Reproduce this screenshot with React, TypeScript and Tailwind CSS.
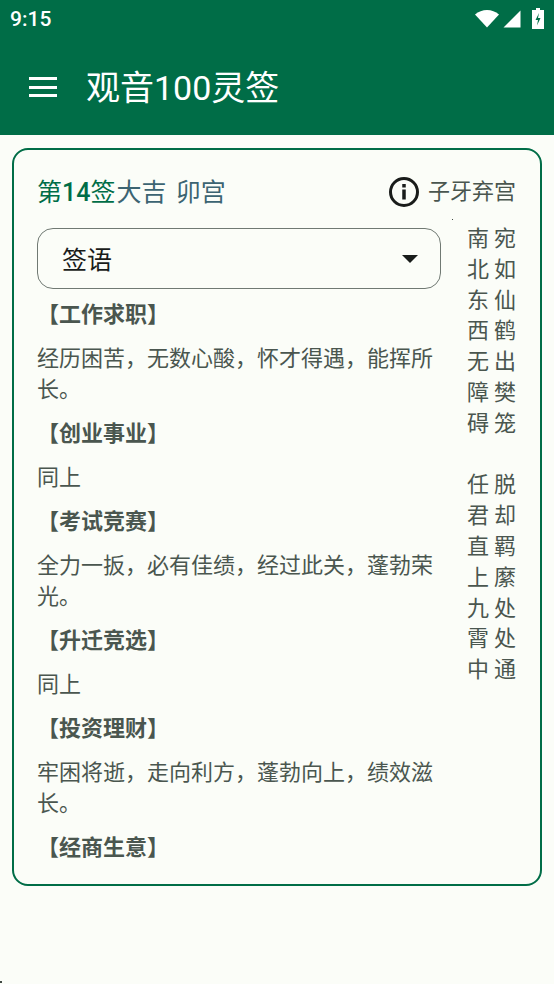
import { Fragment } from 'react';

const FONT = "font-['Roboto','Noto_Sans_CJK_SC',sans-serif]";

const SECTIONS = [
  { title: '【工作求职】', body: '经历困苦，无数心酸，怀才得遇，能挥所长。' },
  { title: '【创业事业】', body: '同上' },
  { title: '【考试竞赛】', body: '全力一扳，必有佳绩，经过此关，蓬勃荣光。' },
  { title: '【升迁竞选】', body: '同上' },
  { title: '【投资理财】', body: '牢困将逝，走向利方，蓬勃向上，绩效滋长。' },
  { title: '【经商生意】', body: '' },
];

const POEM = ['南宛', '北如', '东仙', '西鹤', '无出', '障樊', '碍笼', '', '任脱', '君却', '直羁', '上縻', '九处', '霄处', '中通'];

function StatusBar() {
  return (
    <div className="h-[39px] flex items-center justify-between pl-[10px] pr-[10px] text-white">
      <span className="text-[21px] font-medium leading-none">9:15</span>
      <div className="flex items-center gap-[4px] pb-[2px]">
        <svg width="24" height="20" viewBox="0 0 24 20" fill="#fff">
          <path d="M0 5.500C3.500 2.500 7.500 1 12 1s8.500 1.500 12 4.500L12 18.500z" />
        </svg>
        <svg width="18" height="18" viewBox="0 0 18 18" fill="#fff">
          <path d="M17.500 .5v17H.5z" />
        </svg>
        <svg width="12" height="21" viewBox="0 0 12 21" className="ml-[7.500px]">
          <path d="M4 0h4v2h4v19H0V2h4z" fill="#fff" />
          <path d="M7 5L3.500 12H6L5 17.500l3.500-7.500H6z" fill="#006d47" />
        </svg>
      </div>
    </div>
  );
}

function AppBar() {
  return (
    <div className="h-[96px] flex items-center pl-[29px]">
      <div className="w-[28px] flex flex-col gap-[5.500px]">
        <div className="h-[3px] bg-white" />
        <div className="h-[3px] bg-white" />
        <div className="h-[3px] bg-white" />
      </div>
      <h1 className="ml-[29px] pt-[2px] text-[34px] leading-none font-normal text-white">观音100灵签</h1>
    </div>
  );
}

function Poem() {
  return (
    <div className="relative w-[49px] mt-[2px] shrink-0 text-[22px] leading-[30.800px] text-[#4a564f]">
      <div className="absolute left-[-15px] top-[-5px] w-[1px] h-[1px] bg-[#404943]" />
      {POEM.map((row, i) => (
        <div key={i} className="h-[30.800px] flex justify-between">
          {row.split('').map((ch) => (
            <span key={ch}>{ch}</span>
          ))}
        </div>
      ))}
    </div>
  );
}

export default function App() {
  return (
    <div className={`${FONT} relative w-[554px] h-[984px] overflow-hidden bg-[#fbfdf8]`}>
      <header className="bg-[#006d47]">
        <StatusBar />
        <AppBar />
      </header>

      <main className="mx-[12px] mt-[13px] h-[738px] border-2 border-[#006d47] rounded-[16px] pl-[23px] pr-[24px]">
        <div className="h-[72px] flex items-center justify-between pt-[12px]">
          <div className="text-[25px] leading-none">
            <span className="text-[#006d47]">
              第<span className="font-medium">14</span>签
            </span>
            <span className="ml-[1px] [word-spacing:3px] text-[#3c6472]">大吉 卯宫</span>
          </div>
          <div className="flex items-center gap-[8px]">
            <svg width="32" height="32" viewBox="0 0 32 32" fill="none" className="mb-[1px]">
              <circle cx="16" cy="16" r="13.500" stroke="#191c1a" strokeWidth="3" />
              <rect x="14.250" y="13.500" width="3.500" height="10" fill="#191c1a" />
              <rect x="14.250" y="8" width="3.500" height="3.500" fill="#191c1a" />
            </svg>
            <span className="text-[22px] leading-none text-[#4a564f]">子牙弃宫</span>
          </div>
        </div>

        <div className="flex justify-between">
          <div className="w-[404px] shrink-0">
            <div className="mt-[6px] h-[61px] border-[1.5px] border-[#707973] rounded-[16px] flex items-center justify-between pl-[24px] pr-[22px]">
              <span className="text-[25px] leading-none text-[#191c1a] pt-[4px]">签语</span>
              <div className="w-0 h-0 border-x-[8px] border-x-transparent border-t-[8px] border-t-[#191c1a]" />
            </div>
            <div className="mt-[10px] text-[22px] leading-[31px] text-[#4a564f]">
              {SECTIONS.map((s) => (
                <Fragment key={s.title}>
                  <div className="font-bold">{s.title}</div>
                  {s.body && <p className="mt-[13px] mb-[13px] pr-[4px]">{s.body}</p>}
                </Fragment>
              ))}
            </div>
          </div>
          <Poem />
        </div>
      </main>

      {/* stray mark in the corner of the screenshot */}
      <div className="absolute left-0 bottom-[1px] w-[2px] h-[2px] bg-[#404943]" />
    </div>
  );
}
